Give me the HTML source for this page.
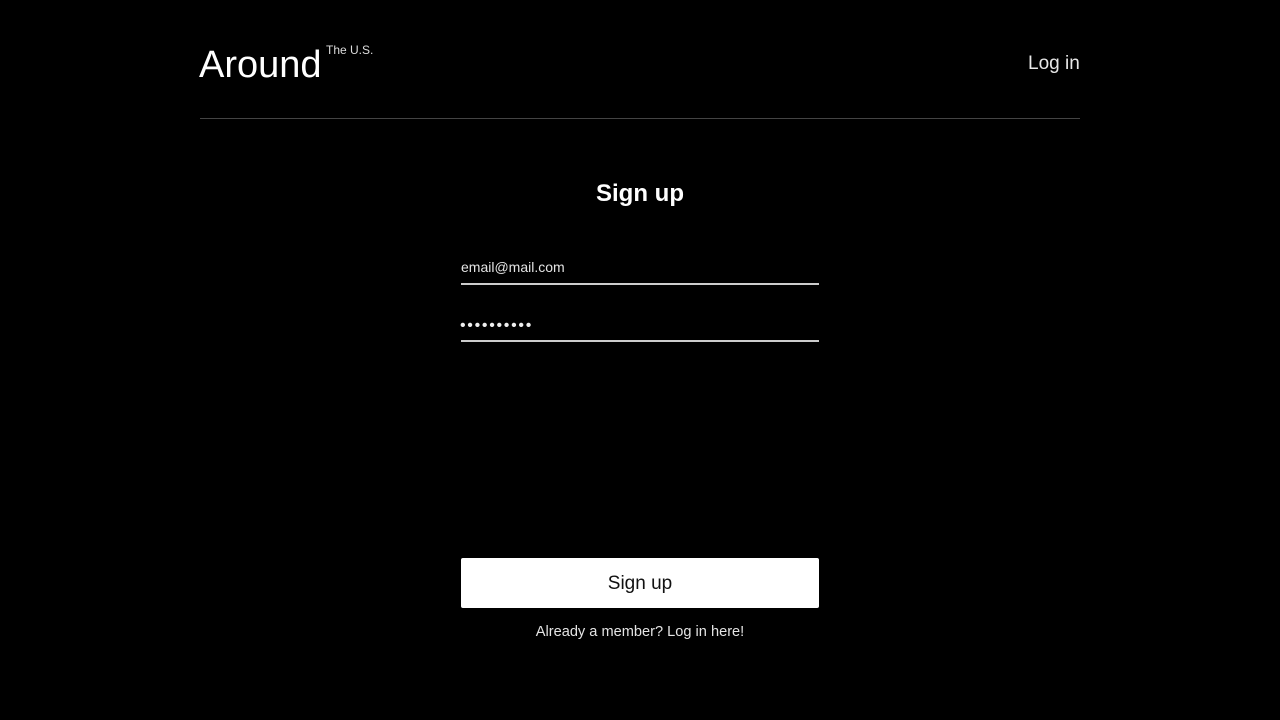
<!DOCTYPE html>
<html><head><style>
body{margin:0;background:#000;width:1280px;height:720px;position:relative;font-family:"Liberation Sans",sans-serif;color:#fff;overflow:hidden}
.a{position:absolute;white-space:nowrap}
</style></head><body>
<div class="a" style="left:199px;top:43px;font-size:38px;line-height:44px">Around</div>
<div class="a" style="left:326px;top:43px;font-size:12px;color:#ddd">The U.S.</div>
<div class="a" style="left:1028px;top:53px;font-size:19px;color:#e8e8e8">Log in</div>
<div class="a" style="left:200px;top:118px;width:880px;height:1px;background:#444"></div>
<div class="a" style="left:0;width:1280px;text-align:center;top:180px;font-size:24px;font-weight:bold">Sign up</div>
<div class="a" style="left:461px;top:259px;font-size:14px;color:#e4e4e4">email@mail.com</div>
<div class="a" style="left:461px;top:283px;width:358px;height:2px;background:#ccc"></div>
<div class="a" style="left:460px;top:317px;font-size:16px;letter-spacing:1.7px;color:#eee">••••••••••</div>
<div class="a" style="left:461px;top:340px;width:358px;height:2px;background:#ccc"></div>
<div class="a" style="left:461px;top:558px;width:358px;height:50px;background:#fff;border-radius:2px;color:#111;font-size:19px;line-height:52px;text-align:center;overflow:hidden">Sign up</div>
<div class="a" style="left:0;width:1280px;text-align:center;top:624px;font-size:14.6px;color:#e4e4e4">Already a member? Log in here!</div>
</body></html>
